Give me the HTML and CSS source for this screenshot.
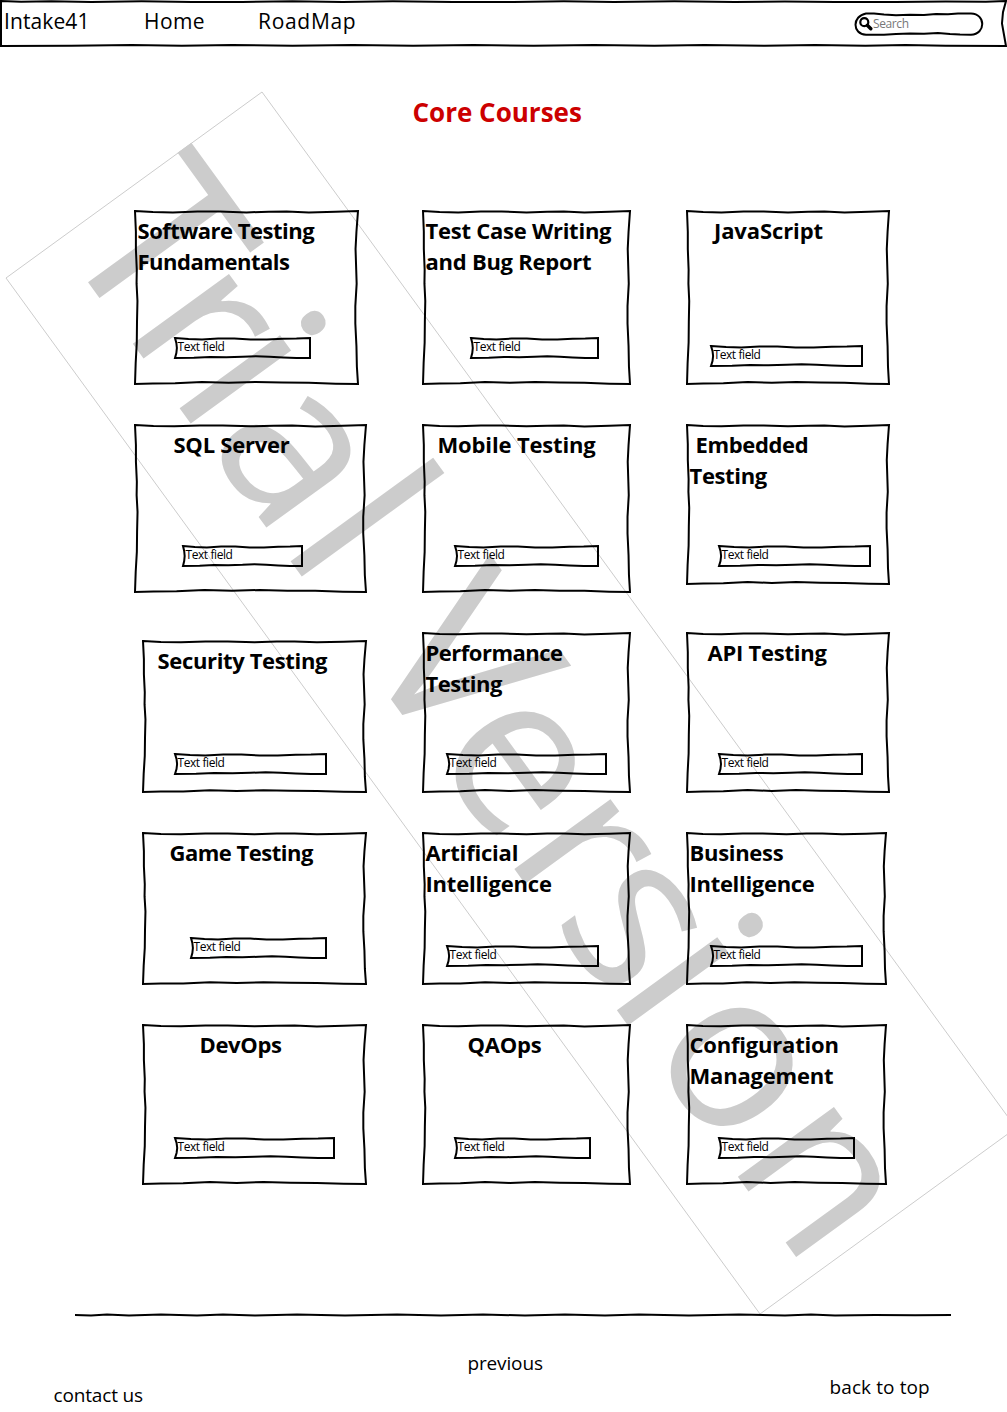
FILE: index.html
```html
<!DOCTYPE html>
<html lang="en">
<head>
<meta charset="utf-8">
<title>Core Courses</title>
<link rel="stylesheet" href="styles.css">
</head>
<body>
<svg class="defs" width="0" height="0" aria-hidden="true">
  <defs>
    <path id="card-line" vector-effect="non-scaling-stroke" d="M0 0 L8 .6 L17 .8 L28 .3 L38 .3 L50 .8 L60 .4 L68 .3 L78 .9 L90 .5 L100 0 L99.3 12 L98.9 22 L99.2 34 L99.4 42 L98.8 55 L98.8 65 L99.3 78 L99.5 90 L100 100 L90 99.8 L78 99.3 L66 99.2 L54 98.8 L42 99.3 L30 98.8 L18 99.6 L8 99.7 L0 100 L.3 88 L.8 76 L.9 64 L1.1 52 L.7 42 L.8 34 L.4 22 L.4 12 L0 0Z"/>
    <path id="field-line" vector-effect="non-scaling-stroke" d="M0 0 L10 5 L20 7 L32 3 L44 3 L56 7 L68 7 L80 4 L90 3 L100 0 L100 100 L90 100 L80 97 L70 94 L60 91 L50 94 L38 96 L26 95 L14 99 L0 100 L1 75 L1.4 50 L1 25 L0 0Z"/>
    <path id="nav-line" vector-effect="non-scaling-stroke" d="M0 0 L2 1.6 L5 .8 L9 2 L14 .8 L19 2 L24 2 L29 .6 L34 2 L39 .8 L45 2 L51 2 L56 .8 L61 2 L67 .6 L73 2 L78 1 L83 2 L89 2 L94 1 L98 1.6 L100 0 L99.7 25 L99.6 50 L99.8 75 L100 100 L94 99.5 L90 98 L86 99.5 L81 97.8 L76 99.5 L70 98 L65 99.5 L59 98 L53 99.5 L47 97.8 L41 99.5 L35 98 L29 99.5 L23 98 L18 99.5 L13 98 L7 99.5 L0 100Z"/>
  </defs>
</svg>

<svg class="watermark" viewBox="0 0 1007 1412" aria-hidden="true">
  <path class="watermark-frame" d="M6 278 262 92 1016 1128 760 1314Z"/>
  <text class="watermark-text" transform="translate(87.5 281.5) rotate(54)"><tspan x="-53">T</tspan><tspan class="small" x="58.2">r</tspan><tspan x="137">i</tspan><tspan class="small" x="199">a</tspan><tspan x="326 400">l </tspan><tspan x="457">V</tspan><tspan class="small" x="581 707.4 788">ers</tspan><tspan x="881">i</tspan><tspan class="small" x="947 1087.6">on</tspan></text>
</svg>

<header class="navbar">
  <svg class="sketch" viewBox="0 0 100 100" preserveAspectRatio="none"><use href="#nav-line"/></svg>
  <nav class="links">
    <a class="link brand">Intake41</a>
    <a class="link home">Home</a>
    <a class="link roadmap">RoadMap</a>
  </nav>
  <div class="search">
    <svg class="search-line" viewBox="0 0 130 24"><path d="M12 1.5 L20 1.4 L30 2.4 L42 3.2 L56 2.8 L70 3 L82 2 L94 2.3 L104 1.6 L117 1.5 C132 2 132 22 117 22.8 L106 22.6 L96 22 L84 21 L70 21.8 L56 21.4 L42 22 L30 22.8 L12 22.8 C-2 22 -2 4 12 1.5Z"/></svg>
    <svg class="search-icon" viewBox="0 0 14 14"><circle cx="5.3" cy="5.2" r="4"/><path d="M8.3 8.2 11.8 11.8"/></svg>
    <span class="search-text">Search</span>
  </div>
</header>

<main class="content">
  <h1 class="heading">Core Courses</h1>
  <section class="courses">
    <article class="card software"><svg class="sketch" viewBox="0 0 100 100" preserveAspectRatio="none"><use href="#card-line"/></svg><h2 class="title">Software Testing<br>Fundamentals</h2><div class="field"><svg class="sketch" viewBox="0 0 100 100" preserveAspectRatio="none"><use href="#field-line"/></svg>Text field</div></article>
    <article class="card testcase"><svg class="sketch" viewBox="0 0 100 100" preserveAspectRatio="none"><use href="#card-line"/></svg><h2 class="title">Test Case Writing<br>and Bug Report</h2><div class="field"><svg class="sketch" viewBox="0 0 100 100" preserveAspectRatio="none"><use href="#field-line"/></svg>Text field</div></article>
    <article class="card javascript"><svg class="sketch" viewBox="0 0 100 100" preserveAspectRatio="none"><use href="#card-line"/></svg><h2 class="title">JavaScript</h2><div class="field"><svg class="sketch" viewBox="0 0 100 100" preserveAspectRatio="none"><use href="#field-line"/></svg>Text field</div></article>

    <article class="card sql"><svg class="sketch" viewBox="0 0 100 100" preserveAspectRatio="none"><use href="#card-line"/></svg><h2 class="title">SQL Server</h2><div class="field"><svg class="sketch" viewBox="0 0 100 100" preserveAspectRatio="none"><use href="#field-line"/></svg>Text field</div></article>
    <article class="card mobile"><svg class="sketch" viewBox="0 0 100 100" preserveAspectRatio="none"><use href="#card-line"/></svg><h2 class="title">Mobile Testing</h2><div class="field"><svg class="sketch" viewBox="0 0 100 100" preserveAspectRatio="none"><use href="#field-line"/></svg>Text field</div></article>
    <article class="card embedded"><svg class="sketch" viewBox="0 0 100 100" preserveAspectRatio="none"><use href="#card-line"/></svg><h2 class="title">Embedded<br>Testing</h2><div class="field"><svg class="sketch" viewBox="0 0 100 100" preserveAspectRatio="none"><use href="#field-line"/></svg>Text field</div></article>

    <article class="card security"><svg class="sketch" viewBox="0 0 100 100" preserveAspectRatio="none"><use href="#card-line"/></svg><h2 class="title">Security Testing</h2><div class="field"><svg class="sketch" viewBox="0 0 100 100" preserveAspectRatio="none"><use href="#field-line"/></svg>Text field</div></article>
    <article class="card performance"><svg class="sketch" viewBox="0 0 100 100" preserveAspectRatio="none"><use href="#card-line"/></svg><h2 class="title">Performance<br>Testing</h2><div class="field"><svg class="sketch" viewBox="0 0 100 100" preserveAspectRatio="none"><use href="#field-line"/></svg>Text field</div></article>
    <article class="card api"><svg class="sketch" viewBox="0 0 100 100" preserveAspectRatio="none"><use href="#card-line"/></svg><h2 class="title">API Testing</h2><div class="field"><svg class="sketch" viewBox="0 0 100 100" preserveAspectRatio="none"><use href="#field-line"/></svg>Text field</div></article>

    <article class="card game"><svg class="sketch" viewBox="0 0 100 100" preserveAspectRatio="none"><use href="#card-line"/></svg><h2 class="title">Game Testing</h2><div class="field"><svg class="sketch" viewBox="0 0 100 100" preserveAspectRatio="none"><use href="#field-line"/></svg>Text field</div></article>
    <article class="card ai"><svg class="sketch" viewBox="0 0 100 100" preserveAspectRatio="none"><use href="#card-line"/></svg><h2 class="title">Artificial<br>Intelligence</h2><div class="field"><svg class="sketch" viewBox="0 0 100 100" preserveAspectRatio="none"><use href="#field-line"/></svg>Text field</div></article>
    <article class="card business"><svg class="sketch" viewBox="0 0 100 100" preserveAspectRatio="none"><use href="#card-line"/></svg><h2 class="title">Business<br>Intelligence</h2><div class="field"><svg class="sketch" viewBox="0 0 100 100" preserveAspectRatio="none"><use href="#field-line"/></svg>Text field</div></article>

    <article class="card devops"><svg class="sketch" viewBox="0 0 100 100" preserveAspectRatio="none"><use href="#card-line"/></svg><h2 class="title">DevOps</h2><div class="field"><svg class="sketch" viewBox="0 0 100 100" preserveAspectRatio="none"><use href="#field-line"/></svg>Text field</div></article>
    <article class="card qaops"><svg class="sketch" viewBox="0 0 100 100" preserveAspectRatio="none"><use href="#card-line"/></svg><h2 class="title">QAOps</h2><div class="field"><svg class="sketch" viewBox="0 0 100 100" preserveAspectRatio="none"><use href="#field-line"/></svg>Text field</div></article>
    <article class="card config"><svg class="sketch" viewBox="0 0 100 100" preserveAspectRatio="none"><use href="#card-line"/></svg><h2 class="title">Configuration<br>Management</h2><div class="field"><svg class="sketch" viewBox="0 0 100 100" preserveAspectRatio="none"><use href="#field-line"/></svg>Text field</div></article>
  </section>
</main>

<footer class="footer">
  <svg class="divider" viewBox="0 0 876 4"><path d="M0 2 L16 2.4 L32 1.6 L54 2.4 L86 1.5 L122 2.4 L148 1.6 L180 2.4 L222 1.6 L270 2.5 L322 1.5 L366 2.4 L408 1.5 L450 2.5 L490 1.6 L530 2.4 L564 1.5 L614 2.4 L664 1.5 L710 2.4 L736 1.6 L760 2.4 L800 2 L840 2.3 L876 2"/></svg>
  <div class="footer-links">
    <a class="footer-link contact">contact us</a>
    <a class="footer-link previous">previous</a>
    <a class="footer-link top">back to top</a>
  </div>
</footer>
</body>
</html>
```

FILE: styles.css
```css
* { box-sizing: border-box; }

body {
  position: relative;
  width: 1007px;
  height: 1412px;
  margin: 0;
  overflow: hidden;
  background: #fff;
  color: #000;
  font-family: "Open Sans", "Noto Sans", sans-serif;
}

.defs { position: absolute; }

/* Diagonal stamp behind the page content */
.watermark {
  position: absolute;
  inset: 0;
  z-index: -1;
  width: 1007px;
  height: 1412px;
  overflow: visible;
}
.watermark-frame { fill: none; stroke: #ccc; stroke-width: 1; }
.watermark-text { fill: #ccc; font-size: 232px; }
.watermark-text .small { font-size: 222px; }

/* Hand-drawn outline stretched over its box */
.sketch {
  position: absolute;
  inset: 0;
  width: 100%;
  height: 100%;
  overflow: visible;
  fill: none;
  stroke: #000;
  stroke-width: 2;
}

.navbar {
  position: relative;
  display: flex;
  justify-content: space-between;
  width: 1005px;
  height: 45px;
  margin: 1px;
}
.links { display: flex; padding-left: 3px; }
.link { font-size: 21px; line-height: 40px; white-space: nowrap; }
.brand { width: 140px; letter-spacing: .1px; }
.home { width: 114px; letter-spacing: .4px; }
.roadmap { letter-spacing: .7px; }

.search {
  position: relative;
  display: flex;
  width: 130px;
  height: 24px;
  margin: 11px 22px 0 0;
  padding: 5px 0 0 5px;
}
.search-line {
  position: absolute;
  inset: 0;
  width: 130px;
  height: 24px;
  fill: none;
  stroke: #000;
  stroke-width: 2;
}
.search-icon { width: 14px; height: 14px; fill: none; stroke: #000; stroke-width: 2.2; }
.search-icon path { stroke-width: 3.4; stroke-linecap: round; }
.search-text { color: #777; font-size: 12px; line-height: 14px; letter-spacing: -.4px; }

.heading {
  height: 164px;
  margin: 0;
  padding: 45px 0 0 412.5px;
  color: #c00;
  font-size: 26px;
  line-height: 40px;
  font-weight: 700;
}

.courses {
  display: grid;
  grid-template-columns: 288px 264px 202px;
  grid-template-rows: 214px 208px 200px 192px 159px;
  padding-left: 135px;
}

.card {
  position: relative;
  display: flex;
  flex-direction: column;
  width: var(--w, 207px);
  height: var(--h, 159px);
  padding: 4px 0 var(--below, 26px);
}
.title {
  margin: 0;
  padding-left: var(--indent, 2.5px);
  font-size: 22px;
  line-height: 31px;
  font-weight: 700;
  letter-spacing: var(--track, -.35px);
  white-space: nowrap;
}
.field {
  position: relative;
  width: var(--field, 151px);
  height: 20px;
  margin: auto 0 0 var(--left, 32px);
  padding-left: 2.5px;
  font-size: 12px;
  line-height: 18px;
  letter-spacing: -.42px;
}

.software { --w: 223px; --h: 173px; --field: 135px; --left: 40px; --track: -.48px; }
.testcase { --h: 173px; --field: 127px; --left: 48px; --track: -.25px; }
.javascript { --w: 202px; --h: 173px; --left: 24px; --below: 18px; --indent: 27px; --track: -.1px; }

.sql { --w: 231px; --h: 167px; --field: 119px; --left: 48px; --indent: 38.5px; --track: -.25px; }
.mobile { --h: 167px; --field: 143px; --indent: 14.5px; --track: -.15px; }
.embedded { --w: 202px; --below: 18px; }
.embedded .title { text-indent: 6px; }

.security { --w: 223px; --h: 151px; --below: 18px; --indent: 14.5px; margin: 8px 0 0 8px; }
.performance { --field: 159px; --left: 24px; --below: 18px; --track: -.5px; }
.api { --w: 202px; --field: 143px; --below: 18px; --indent: 20.5px; --track: -.25px; }

.game { --w: 223px; --h: 151px; --field: 135px; --left: 48px; --indent: 26.5px; --track: -.5px; margin-left: 8px; }
.ai { --h: 151px; --left: 24px; --below: 18px; --track: -.2px; }
.business { --w: 199px; --h: 151px; --left: 24px; --below: 18px; --track: -.3px; }

.devops { --w: 223px; --field: 159px; --indent: 56.5px; margin-left: 8px; }
.qaops { --field: 135px; --indent: 44.5px; --track: -.2px; }
.config { --w: 199px; --field: 135px; --track: -.2px; }

.footer { padding: 129px 0 0 75px; }
.divider {
  display: block;
  width: 876px;
  height: 4px;
  overflow: visible;
  fill: none;
  stroke: #000;
  stroke-width: 2;
}
.footer-links { display: flex; align-items: flex-start; margin-left: -21.5px; }
.footer-link { font-size: 19px; line-height: 28px; white-space: nowrap; letter-spacing: -.15px; }
.contact { width: 414px; margin-top: 64px; }
.previous { width: 362px; margin-top: 32px; }
.top { margin-top: 56px; letter-spacing: .1px; }
```
